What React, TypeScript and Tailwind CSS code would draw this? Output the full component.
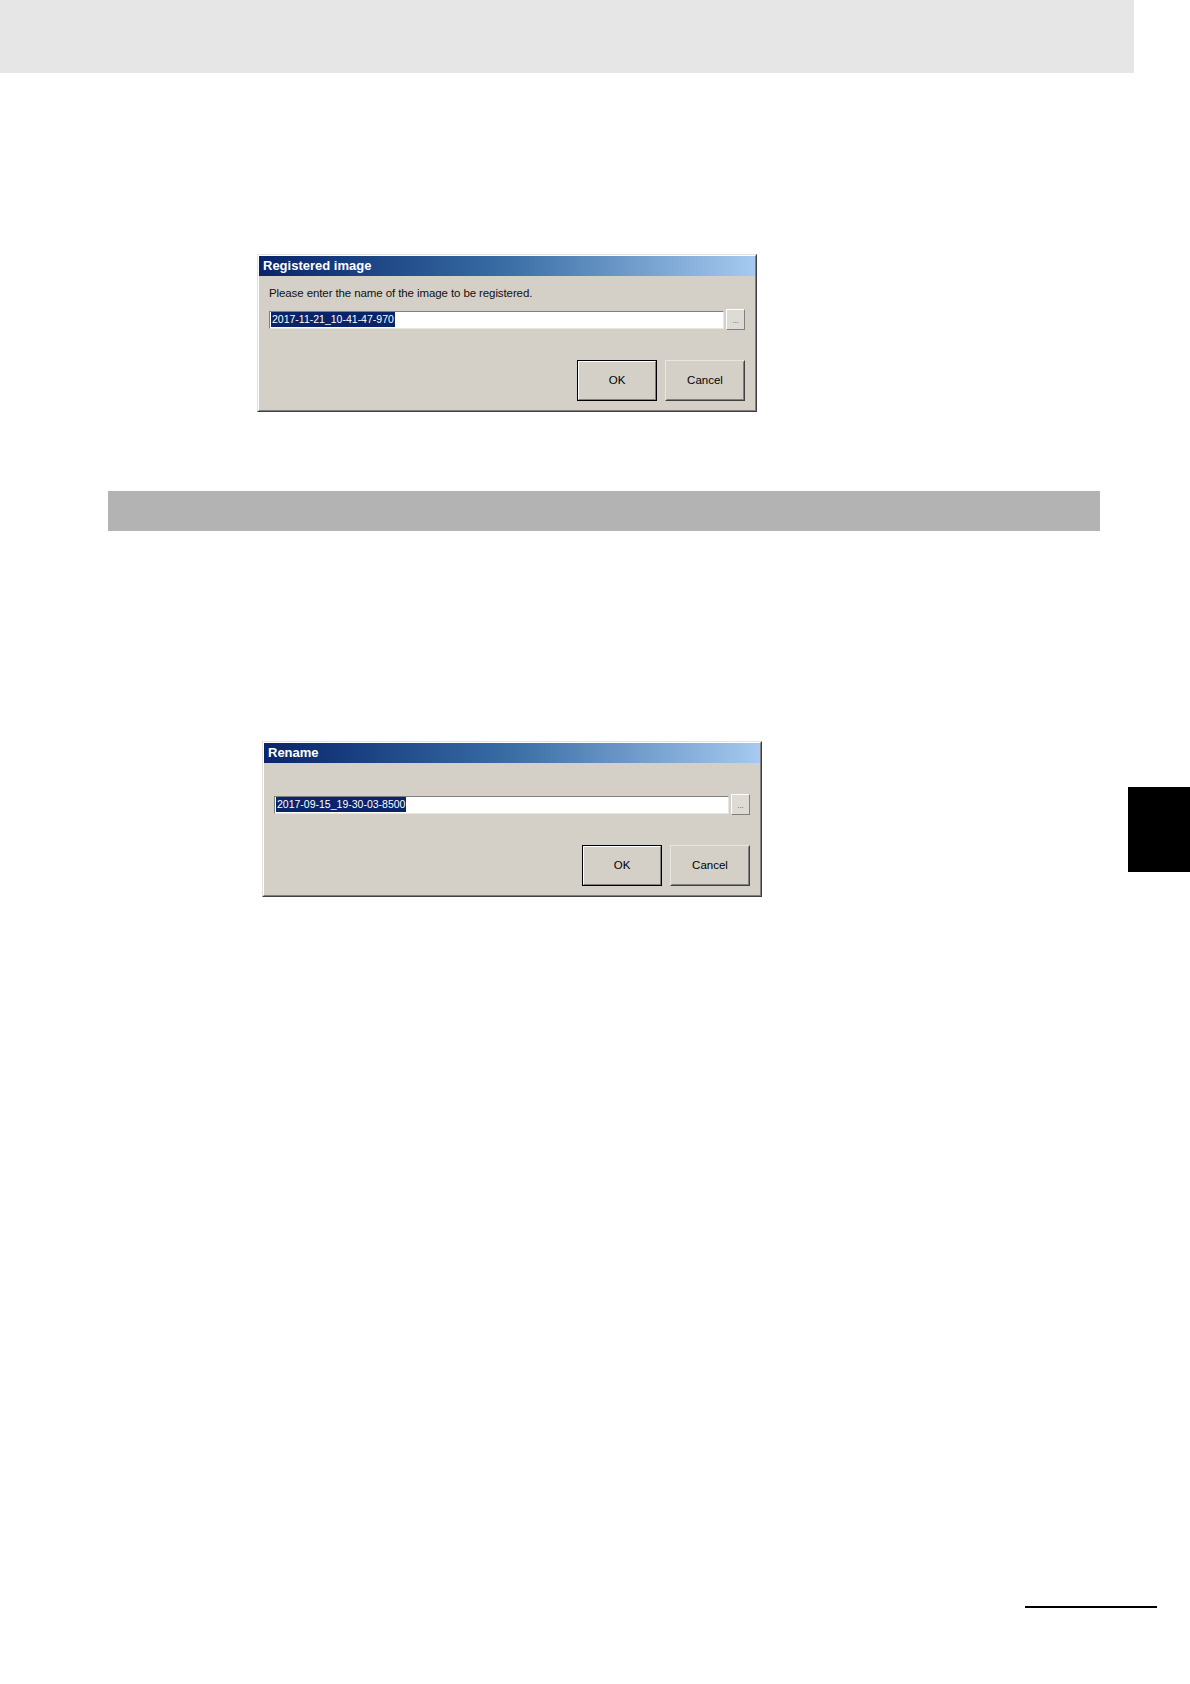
import React from "react";

type DialogProps = { title: string; message?: string; value: string };

function Win98Button({ label, isDefault }: { label: string; isDefault?: boolean }) {
  return (
    <div
      className={
        "w-[80px] h-[41px] " +
        (isDefault ? "border border-black" : "border border-[#e8e6e0] border-r-[#404040] border-b-[#404040]")
      }
    >
      <div
        className={
          "w-full h-full flex items-center justify-center text-[11.5px] text-black " +
          (isDefault
            ? "border border-white border-r-[#808080] border-b-[#808080]"
            : "border border-[#ffffff] border-r-[#808080] border-b-[#808080] border-t-[#d4d0c8] border-l-[#d4d0c8]")
        }
        style={{ fontFamily: '"Liberation Sans", Arial, sans-serif' }}
      >
        {label}
      </div>
    </div>
  );
}

function Dialog({ title, message, value }: DialogProps) {
  return (
    <div className="w-[500px] bg-[#d4d0c8] border border-[#e4e2dc] border-r-[#404040] border-b-[#404040]">
      <div className="border border-white border-r-[#808080] border-b-[#808080]">
        <div
          className="h-[20px] flex items-center pl-[4px] bg-gradient-to-r from-[#0a246a] via-[#3a6ea5] to-[#a6caf0] text-white font-bold text-[13px]"
          style={{ fontFamily: '"Liberation Sans", Arial, sans-serif' }}
        >
          {title}
        </div>
        <div
          className={"px-[10px] pb-[9px] " + (message ? "pt-[10px]" : "pt-[8px]")}
          style={{ fontFamily: '"Liberation Sans", Arial, sans-serif' }}
        >
          <div className="h-[14px] mb-[9px] text-[11.5px] leading-[14px] text-[#111] tracking-[-0.1px]">{message ?? ""}</div>
          <div className="h-[21px] flex items-center gap-[2px]">
            <div className="flex-1 h-[18px] bg-white border border-[#808080] border-r-[#e8e6e0] border-b-[#e8e6e0] flex items-center pl-[1px]">
              <span className="bg-[#0a246a] text-white text-[10.5px] leading-[15px] px-[1px]">{value}</span>
            </div>
            <div className="w-[19px] h-[21px] border border-white border-r-[#808080] border-b-[#808080] bg-[#dedbd4] flex items-end justify-center pb-[4px]">
              <span className="text-[8px] leading-[8px] text-[#555]">...</span>
            </div>
          </div>
          <div className="mt-[30px] flex justify-end gap-[8px]">
            <Win98Button label="OK" isDefault />
            <Win98Button label="Cancel" />
          </div>
        </div>
      </div>
    </div>
  );
}

export default function App() {
  return (
    <div className="w-[1190px] min-h-[1684px] bg-white relative overflow-hidden">
      <div className="w-[1134px] h-[73px] bg-[#e6e6e6]" />
      <div className="mt-[181px] ml-[257px]">
        <Dialog
          title="Registered image"
          message="Please enter the name of the image to be registered."
          value="2017-11-21_10-41-47-970"
        />
      </div>
      <div className="mt-[79px] ml-[108px] w-[992px] h-[40px] bg-[#b3b3b3]" />
      <div className="mt-[210px] flex items-start">
        <div className="ml-[262px]">
          <Dialog title="Rename" value="2017-09-15_19-30-03-8500" />
        </div>
        <div className="ml-auto mt-[46px] w-[62px] h-[85px] bg-black" />
      </div>
      <div className="mt-[709px] ml-[1025px] w-[132px] h-[2px] bg-black" />
    </div>
  );
}
